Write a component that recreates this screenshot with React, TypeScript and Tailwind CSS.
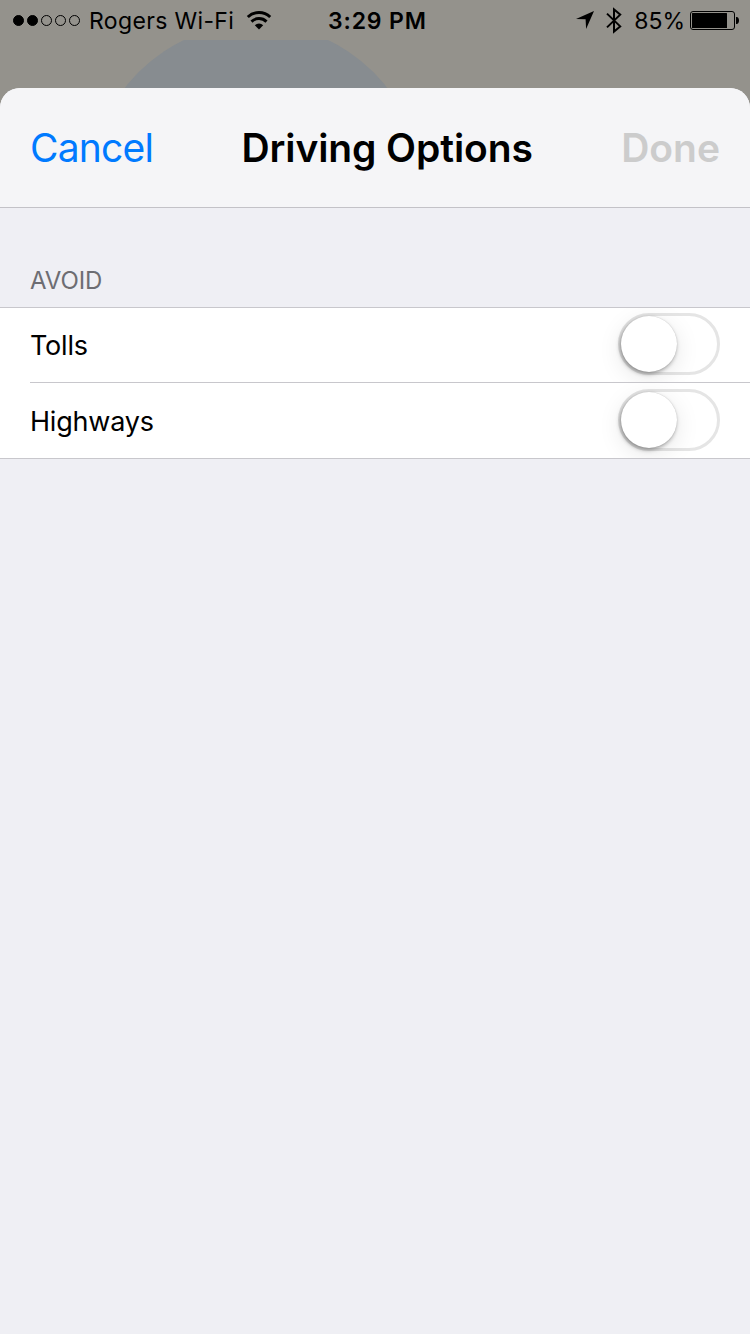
import { useState } from "react";

const signalDots = [true, true, false, false, false];

const avoidOptions = [
  { id: "tolls", label: "Tolls" },
  { id: "highways", label: "Highways" },
];

function WifiIcon() {
  return (
    <svg width="26" height="19" viewBox="0 0 26 19" className="shrink-0">
      <g fill="none" stroke="#000" strokeWidth="3">
        <path d="M1.8 6a16.3 16.3 0 0 1 22.4 0" />
        <path d="M5.5 10.6a10.8 10.8 0 0 1 15 0" />
      </g>
      <path d="M8.8 14.2a6 6 0 0 1 8.4 0L13 18.6z" />
    </svg>
  );
}

function LocationIcon() {
  return (
    <svg width="18" height="18" viewBox="0 0 18 18" className="shrink-0">
      <path d="M18 0L10.1 18 9.6 8.3 0 7.9z" />
    </svg>
  );
}

function BluetoothIcon() {
  return (
    <svg width="16" height="27" viewBox="0 0 16 27" className="shrink-0">
      <path
        d="M1 6.6l13.2 12.8L8 24.6V2.4l6.2 5.2L1 20.4"
        fill="none"
        stroke="#000"
        strokeWidth="2"
      />
    </svg>
  );
}

function BatteryIcon() {
  return (
    <svg width="49" height="19" viewBox="0 0 49 19" className="shrink-0">
      <rect x="0.5" y="0.5" width="44" height="18" rx="2.5" fill="none" stroke="#000" />
      <rect x="2" y="2" width="35" height="15" rx="0.5" />
      <path d="M46 6h.6c1.6 0 2.4 1.6 2.4 3.5s-.8 3.5-2.4 3.5H46z" />
    </svg>
  );
}

function StatusBar() {
  return (
    <div className="relative flex h-10 items-center justify-between bg-[#94928c] pl-[13px] pr-[11px] text-[23px] leading-8">
      <div className="flex items-center">
        <div className="flex gap-[3px]">
          {signalDots.map((filled, i) => (
            <span
              key={i}
              className={`size-[11px] rounded-full border border-black ${filled ? "bg-black" : ""}`}
            />
          ))}
        </div>
        <span className="ml-[9px] pt-0.5 tracking-[0.35px]">Rogers Wi-Fi</span>
        <span className="ml-3">
          <WifiIcon />
        </span>
      </div>
      <span className="absolute left-[328px] top-[5px] font-semibold tracking-[0.85px]">
        3:29 PM
      </span>
      <div className="flex items-center">
        <LocationIcon />
        <span className="ml-3">
          <BluetoothIcon />
        </span>
        <span className="ml-3 pt-0.5">85%</span>
        <span className="ml-[5px]">
          <BatteryIcon />
        </span>
      </div>
    </div>
  );
}

function Toggle({
  label,
  checked,
  onChange,
}: {
  label: string;
  checked: boolean;
  onChange: () => void;
}) {
  return (
    <button
      role="switch"
      aria-checked={checked}
      aria-label={label}
      onClick={onChange}
      className={`mb-0.5 flex h-[62px] w-[102px] shrink-0 rounded-full border-[3px] ${
        checked ? "justify-end border-[#4cd964] bg-[#4cd964]" : "border-[#e5e5e5] bg-white"
      }`}
    >
      <span className="size-14 rounded-full bg-white shadow-[0_0_1px_rgba(0,0,0,0.2),-1px_2px_4px_rgba(0,0,0,0.35),0_6px_24px_rgba(0,0,0,0.1)]" />
    </button>
  );
}

export default function App() {
  const [avoided, setAvoided] = useState<string[]>([]);

  function toggle(id: string) {
    setAvoided((prev) =>
      prev.includes(id) ? prev.filter((x) => x !== id) : [...prev, id]
    );
  }

  const changed = avoided.length > 0;

  return (
    <div className="flex h-[1334px] w-[750px] flex-col overflow-hidden bg-[#94928c] font-['Inter',sans-serif] text-black">
      <StatusBar />

      {/* Dimmed map behind the sheet */}
      <div className="relative h-12 shrink-0">
        <svg width="750" height="70" className="absolute left-0 top-0">
          <circle cx="256" cy="149.5" r="166" fill="#878c90" />
        </svg>
      </div>

      {/* Sheet */}
      <div className="relative flex flex-1 flex-col overflow-hidden rounded-t-[20px] bg-[#efeff4]">
        <header className="flex h-[120px] items-center justify-between border-b border-[#c3c2c7] bg-[#f5f5f7] px-[30px] pt-px text-[39px]">
          <button className="tracking-[-0.8px] text-[#007aff]">Cancel</button>
          <h1 className="font-semibold tracking-[-0.1px]">Driving Options</h1>
          <button
            disabled={!changed}
            className={`font-semibold ${changed ? "text-[#007aff]" : "text-[#cccccc]"}`}
          >
            Done
          </button>
        </header>

        <h2 className="px-[30px] pb-2.5 pt-[57px] text-2xl leading-8 tracking-[-0.1px] text-[#6d6d72]">
          AVOID
        </h2>

        <ul className="border-y border-[#c8c7cc] bg-white">
          {avoidOptions.map(({ id, label }, i) => (
            <li
              key={id}
              className={`overflow-hidden pl-[30px] ${i > 0 ? "h-[76px]" : "h-[74px]"}`}
            >
              <div
                className={`flex h-full items-center justify-between pr-[30px] text-[27px] tracking-[-0.2px] ${
                  i > 0 ? "border-t border-[#c8c7cc]" : ""
                }`}
              >
                <span className="pt-[3px]">{label}</span>
                <Toggle
                  label={label}
                  checked={avoided.includes(id)}
                  onChange={() => toggle(id)}
                />
              </div>
            </li>
          ))}
        </ul>
      </div>
    </div>
  );
}
